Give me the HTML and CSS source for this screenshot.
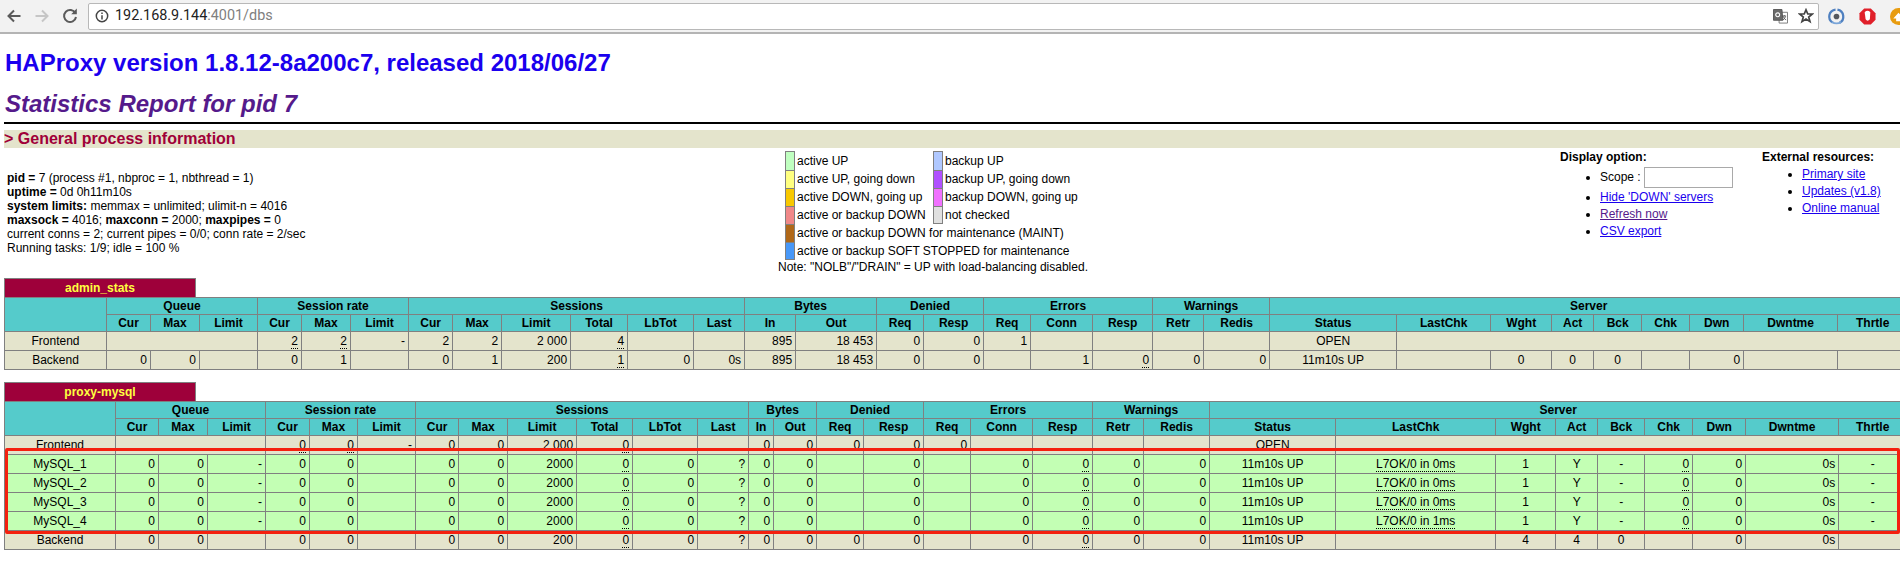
FILE: index.html
```html
<!DOCTYPE html>
<html lang="en">
<head>
<meta charset="utf-8">
<title>Statistics Report for HAProxy</title>
<link rel="stylesheet" href="styles.css">
</head>
<body>
<header class="toolbar">
  <svg class="nav" viewBox="0 0 16 16"><path class="ic" d="M14.5 8H3M8 2.5 2.5 8 8 13.5"/></svg>
  <svg class="nav" viewBox="0 0 16 16"><path class="ic off" d="M1.5 8H13M8 2.5 13.5 8 8 13.5"/></svg>
  <svg class="nav" viewBox="0 0 16 16"><path class="ic" d="M13.4 5.2A6 6 0 1 0 14 9"/><path class="fill" d="M9.2 6.2h5.6V.6z"/></svg>
  <div class="omnibox">
    <svg class="info" viewBox="0 0 16 16"><circle cx="8" cy="8" r="6.5"/><path d="M8 7v5M8 4v1.8"/></svg>
    <span class="url">192.168.9.144<span class="url-rest">:4001/dbs</span></span>
    <svg class="translate" viewBox="0 0 16 16"><path class="tr-back" d="M6.5 3.5H15.5V15H6.5z"/><path class="tr-front" d="M.5.5H9.5L10.5 12H.5z"/><circle class="tr-g" cx="5" cy="6.2" r="2.1"/><path class="tr-x" d="M10 7.5h4M12 6.5v1M11 8c.4 1.5 1.5 3 3 3.6M13.3 8c-.4 1.6-1.3 2.8-2.6 3.6"/></svg>
    <svg class="star" viewBox="0 0 16 16"><path d="M8 1.8 9.8 6h4.6l-3.7 3 1.3 4.6L8 11l-4 2.6L5.3 9 1.6 6h4.6z"/></svg>
  </div>
  <div class="ext-icons">
    <svg class="ext" viewBox="0 0 18 18"><path class="ring-b" d="M5 15.5A7.5 7.5 0 0 1 8 1.6"/><path class="ring-b" d="M10 1.7A7.5 7.5 0 0 1 12 15.8"/><path class="ring-c" d="M4 14.5A8 8 0 0 0 14 14.5"/><circle class="dot" cx="9" cy="9" r="3"/></svg>
    <svg class="ext" viewBox="0 0 18 18"><path class="stop" d="M5.5 0.5H12.5L17.5 5.5V12.5L12.5 17.5H5.5L.5 12.5V5.5z"/><path class="hand" d="M6 4.5Q9 1.5 12 4.5L11.5 12Q9 15 7 12z"/></svg>
    <svg class="ext" viewBox="0 0 18 18"><circle class="orange" cx="9" cy="9" r="9"/><path class="cloud" d="M3.5 11 9 5l5.5 6h-3v3h-5v-3z"/></svg>
  </div>
</header>

<main class="page">
  <h1 class="heading-main"><a href="#" class="link-plain">HAProxy version 1.8.12-8a200c7, released 2018/06/27</a></h1>
  <h2 class="heading-sub">Statistics Report for pid 7</h2>
  <hr class="rule">
  <h3 class="section">&gt; General process information</h3>

  <section class="info-row">
    <p class="process">
      <b>pid = </b>7 (process #1, nbproc = 1, nbthread = 1)<br>
      <b>uptime = </b>0d 0h11m10s<br>
      <b>system limits:</b> memmax = unlimited; ulimit-n = 4016<br>
      <b>maxsock = </b>4016; <b>maxconn = </b>2000; <b>maxpipes = </b>0<br>
      current conns = 2; current pipes = 0/0; conn rate = 2/sec<br>
      Running tasks: 1/9; idle = 100 %
    </p>

    <div class="legend-box">
      <table class="legend">
        <tr><td><i class="sw s-up"></i></td><td class="l1">active UP</td><td><i class="sw s-bup"></i></td><td>backup UP</td></tr>
        <tr><td><i class="sw s-upd"></i></td><td>active UP, going down</td><td><i class="sw s-bupd"></i></td><td>backup UP, going down</td></tr>
        <tr><td><i class="sw s-dnu"></i></td><td>active DOWN, going up</td><td><i class="sw s-bdnu"></i></td><td>backup DOWN, going up</td></tr>
        <tr><td><i class="sw s-dn"></i></td><td>active or backup DOWN</td><td><i class="sw s-nc"></i></td><td>not checked</td></tr>
        <tr><td><i class="sw s-mt"></i></td><td colspan="3">active or backup DOWN for maintenance (MAINT)</td></tr>
        <tr><td><i class="sw s-st"></i></td><td colspan="3">active or backup SOFT STOPPED for maintenance</td></tr>
      </table>
      <div class="legend-note">Note: "NOLB"/"DRAIN" = UP with load-balancing disabled.</div>
    </div>

    <div class="options">
      <b class="opt-title">Display option:</b>
      <ul class="opt-list">
        <li class="scope">Scope : <input class="scope-input" type="text"></li>
        <li><a href="#" class="lnk">Hide 'DOWN' servers</a></li>
        <li><a href="#" class="lnk visited">Refresh now</a></li>
        <li><a href="#" class="lnk">CSV export</a></li>
      </ul>
    </div>

    <div class="external">
      <b class="opt-title">External resources:</b>
      <ul class="opt-list">
        <li><a href="#" class="lnk">Primary site</a></li>
        <li><a href="#" class="lnk">Updates (v1.8)</a></li>
        <li><a href="#" class="lnk">Online manual</a></li>
      </ul>
    </div>
  </section>

  <section class="proxy">
    <div class="pxname">admin_stats</div>
    <table class="tbl tbl-a">
      <colgroup><col><col><col><col><col><col><col><col><col><col><col><col><col><col><col><col><col><col><col><col><col><col><col><col><col><col><col><col><col><col><col></colgroup>
      <tr class="titre"><th rowspan="2"></th><th colspan="3">Queue</th><th colspan="3">Session rate</th><th colspan="6">Sessions</th><th colspan="2">Bytes</th><th colspan="2">Denied</th><th colspan="3">Errors</th><th colspan="2">Warnings</th><th colspan="9">Server</th></tr>
      <tr class="titre"><th>Cur</th><th>Max</th><th>Limit</th><th>Cur</th><th>Max</th><th>Limit</th><th>Cur</th><th>Max</th><th>Limit</th><th>Total</th><th>LbTot</th><th>Last</th><th>In</th><th>Out</th><th>Req</th><th>Resp</th><th>Req</th><th>Conn</th><th>Resp</th><th>Retr</th><th>Redis</th><th>Status</th><th>LastChk</th><th>Wght</th><th>Act</th><th>Bck</th><th>Chk</th><th>Dwn</th><th>Dwntme</th><th>Thrtle</th></tr>
      <tr class="plain"><td class="ac">Frontend</td><td colspan="3"></td><td><u>2</u></td><td><u>2</u></td><td>-</td><td>2</td><td>2</td><td>2 000</td><td><u>4</u></td><td></td><td></td><td>895</td><td>18 453</td><td>0</td><td>0</td><td>1</td><td></td><td></td><td></td><td></td><td class="ac">OPEN</td><td colspan="8"></td></tr>
      <tr class="plain"><td class="ac">Backend</td><td>0</td><td>0</td><td></td><td>0</td><td>1</td><td></td><td>0</td><td>1</td><td>200</td><td><u>1</u></td><td>0</td><td>0s</td><td>895</td><td>18 453</td><td>0</td><td>0</td><td></td><td>1</td><td><u>0</u></td><td>0</td><td>0</td><td class="ac">11m10s UP</td><td></td><td class="ac">0</td><td class="ac">0</td><td class="ac">0</td><td></td><td>0</td><td></td><td></td></tr>
    </table>
  </section>

  <section class="proxy proxy-second">
    <div class="pxname">proxy-mysql</div>
    <table class="tbl tbl-b">
      <colgroup><col><col><col><col><col><col><col><col><col><col><col><col><col><col><col><col><col><col><col><col><col><col><col><col><col><col><col><col><col><col><col></colgroup>
      <tr class="titre"><th rowspan="2"></th><th colspan="3">Queue</th><th colspan="3">Session rate</th><th colspan="6">Sessions</th><th colspan="2">Bytes</th><th colspan="2">Denied</th><th colspan="3">Errors</th><th colspan="2">Warnings</th><th colspan="9">Server</th></tr>
      <tr class="titre"><th>Cur</th><th>Max</th><th>Limit</th><th>Cur</th><th>Max</th><th>Limit</th><th>Cur</th><th>Max</th><th>Limit</th><th>Total</th><th>LbTot</th><th>Last</th><th>In</th><th>Out</th><th>Req</th><th>Resp</th><th>Req</th><th>Conn</th><th>Resp</th><th>Retr</th><th>Redis</th><th>Status</th><th>LastChk</th><th>Wght</th><th>Act</th><th>Bck</th><th>Chk</th><th>Dwn</th><th>Dwntme</th><th>Thrtle</th></tr>
      <tr class="plain"><td class="ac">Frontend</td><td colspan="3"></td><td><u>0</u></td><td><u>0</u></td><td>-</td><td>0</td><td>0</td><td>2 000</td><td><u>0</u></td><td></td><td></td><td>0</td><td>0</td><td>0</td><td>0</td><td>0</td><td></td><td></td><td></td><td></td><td class="ac">OPEN</td><td colspan="8"></td></tr>
      <tr class="active"><td class="ac">MySQL_1</td><td>0</td><td>0</td><td>-</td><td>0</td><td>0</td><td></td><td>0</td><td>0</td><td>2000</td><td><u>0</u></td><td>0</td><td>?</td><td>0</td><td>0</td><td></td><td>0</td><td></td><td>0</td><td><u>0</u></td><td>0</td><td>0</td><td class="ac">11m10s UP</td><td class="ac"><u>L7OK/0 in 0ms</u></td><td class="ac">1</td><td class="ac">Y</td><td class="ac">-</td><td><u>0</u></td><td>0</td><td>0s</td><td class="ac">-</td></tr>
      <tr class="active"><td class="ac">MySQL_2</td><td>0</td><td>0</td><td>-</td><td>0</td><td>0</td><td></td><td>0</td><td>0</td><td>2000</td><td><u>0</u></td><td>0</td><td>?</td><td>0</td><td>0</td><td></td><td>0</td><td></td><td>0</td><td><u>0</u></td><td>0</td><td>0</td><td class="ac">11m10s UP</td><td class="ac"><u>L7OK/0 in 0ms</u></td><td class="ac">1</td><td class="ac">Y</td><td class="ac">-</td><td><u>0</u></td><td>0</td><td>0s</td><td class="ac">-</td></tr>
      <tr class="active"><td class="ac">MySQL_3</td><td>0</td><td>0</td><td>-</td><td>0</td><td>0</td><td></td><td>0</td><td>0</td><td>2000</td><td><u>0</u></td><td>0</td><td>?</td><td>0</td><td>0</td><td></td><td>0</td><td></td><td>0</td><td><u>0</u></td><td>0</td><td>0</td><td class="ac">11m10s UP</td><td class="ac"><u>L7OK/0 in 0ms</u></td><td class="ac">1</td><td class="ac">Y</td><td class="ac">-</td><td><u>0</u></td><td>0</td><td>0s</td><td class="ac">-</td></tr>
      <tr class="active"><td class="ac">MySQL_4</td><td>0</td><td>0</td><td>-</td><td>0</td><td>0</td><td></td><td>0</td><td>0</td><td>2000</td><td><u>0</u></td><td>0</td><td>?</td><td>0</td><td>0</td><td></td><td>0</td><td></td><td>0</td><td><u>0</u></td><td>0</td><td>0</td><td class="ac">11m10s UP</td><td class="ac"><u>L7OK/0 in 1ms</u></td><td class="ac">1</td><td class="ac">Y</td><td class="ac">-</td><td><u>0</u></td><td>0</td><td>0s</td><td class="ac">-</td></tr>
      <tr class="plain"><td class="ac">Backend</td><td>0</td><td>0</td><td></td><td>0</td><td>0</td><td></td><td>0</td><td>0</td><td>200</td><td><u>0</u></td><td>0</td><td>?</td><td>0</td><td>0</td><td>0</td><td>0</td><td></td><td>0</td><td><u>0</u></td><td>0</td><td>0</td><td class="ac">11m10s UP</td><td></td><td class="ac">4</td><td class="ac">4</td><td class="ac">0</td><td></td><td>0</td><td>0s</td><td></td></tr>
    </table>
    <div class="highlight"></div>
  </section>
</main>
</body>
</html>
```

FILE: styles.css
```css
html, body {
  margin: 0;
  padding: 0;
  background: #fff;
  overflow: hidden;
  height: 565px;
  width: 1900px;
}
body {
  font-family: "Liberation Sans", Arial, sans-serif;
  font-size: 12px;
  line-height: 14px;
  color: #000;
}

/* Browser toolbar */
.toolbar {
  display: flex;
  align-items: center;
  box-sizing: border-box;
  height: 34px;
  padding: 1px 0;
  background: #f2f2f2;
  border-bottom: 2px solid #b4b4b4;
}
.nav {
  width: 16px;
  height: 16px;
  margin: 0 6px;
  flex: none;
}
.ic { fill: none; stroke: #5a5a5a; stroke-width: 2; }
.ic.off { stroke: #c6c6c6; }
.fill { fill: #5a5a5a; }
.omnibox {
  display: flex;
  align-items: center;
  box-sizing: border-box;
  width: 1731px;
  height: 27px;
  margin-left: 4px;
  padding: 0 4px 0 6px;
  background: #fff;
  border: 1px solid #b8b8b8;
  border-radius: 2px;
  flex: none;
}
.info { width: 14px; height: 14px; fill: none; stroke: #444; stroke-width: 1.7; flex: none; }
.url {
  margin-left: 6px;
  font-family: Roboto, sans-serif;
  font-size: 14.4px;
  color: #222;
  white-space: nowrap;
  flex: 1;
}
.url-rest { color: #808080; }
.translate { width: 15px; height: 15px; flex: none; margin-right: 10px; }
.tr-back { fill: #fff; stroke: #777; }
.tr-front { fill: #6a6a6a; stroke: #555; }
.tr-g { fill: none; stroke: #fff; stroke-width: 1.2; }
.tr-x { fill: none; stroke: #555; }
.star { width: 16px; height: 16px; fill: none; stroke: #444; stroke-width: 1.7; flex: none; }
.ext-icons {
  display: flex;
  align-items: center;
  gap: 14px;
  margin-left: 9px;
  flex: none;
}
.ext { width: 17px; height: 17px; flex: none; overflow: visible; }
.ring-b { fill: none; stroke: #4f80c0; stroke-width: 2.4; }
.ring-c { fill: none; stroke: #7aa5d8; stroke-width: 2; }
.dot { fill: #55585e; }
.stop { fill: #e0202a; }
.hand { fill: #fff; }
.orange { fill: #e89c10; }
.cloud { fill: #fff; }

/* Page */
.page { padding-left: 4px; }
.heading-main {
  margin: 0;
  padding: 15px 0 0 1px;
  font-size: 24px;
  line-height: 28px;
  font-weight: bold;
}
.link-plain { color: #1a00ee; text-decoration: none; }
.heading-sub {
  margin: 0;
  padding: 13px 0 0 1px;
  font-size: 24px;
  line-height: 28px;
  font-weight: bold;
  font-style: italic;
  color: #551a8b;
}
.rule {
  margin: 4px 0 0 0;
  height: 2px;
  border: 0;
  background: #000;
}
.section {
  margin: 6px 0 0 0;
  height: 18px;
  font-size: 16px;
  line-height: 18px;
  font-weight: bold;
  color: #a00038;
  background: #e4e4cc;
}

.info-row {
  display: flex;
  align-items: flex-start;
  height: 130px;
}
.process {
  margin: 23px 0 0 3px;
  width: 771px;
  flex: none;
}
.legend-box {
  width: 782px;
  flex: none;
  padding-top: 3px;
}
.legend {
  border-collapse: collapse;
  margin-left: 7px;
}
.legend td { padding: 0; height: 18px; vertical-align: middle; }
.legend tr:first-child td { height: 19px; }
.legend td:nth-child(2) { padding-left: 2px; min-width: 136px; }
.legend td:nth-child(4) { padding-left: 2px; }
.sw {
  display: block;
  box-sizing: border-box;
  width: 10px;
  height: 18px;
  border-left: 1px solid #808080;
  border-right: 1px solid #808080;
  border-top: 1px solid #808080;
}
.legend tr:first-child .sw { height: 19px; }
.legend tr:nth-child(4) td:nth-child(3) .sw { border-bottom: 1px solid #808080; }
.legend tr:last-child .sw { border-bottom: 1px solid #808080; }
.s-up { background: #c0ffc0; }
.s-upd { background: #ffff80; }
.s-dnu { background: #f8c800; }
.s-dn { background: #f08888; }
.s-mt { background: #b06818; }
.s-st { background: #4898f8; }
.s-bup { background: #b0c8ff; }
.s-bupd { background: #b050ff; }
.s-bdnu { background: #f070ff; }
.s-nc { background: #e0e0e0; }
.legend-note { white-space: nowrap; }

.options { width: 202px; flex: none; padding-top: 2px; }
.external { width: 137px; flex: none; padding-top: 2px; }
.opt-title { display: block; }
.opt-list { margin: 3px 0 0 0; padding: 0 0 0 40px; }
.external .opt-list { margin-top: 2px; }
.opt-list li { height: 17px; line-height: 17px; }
.options .opt-list li.scope { height: 22px; line-height: 21px; margin-top: 1px; }
.scope-input {
  box-sizing: border-box;
  width: 89px;
  height: 21px;
  padding: 0;
  margin: 0;
  border: 1px solid #a9a9a9;
  vertical-align: top;
}
.lnk { color: #1a00ee; text-decoration: underline; }
.lnk.visited { color: #551a8b; }

/* Proxy tables */
.proxy { position: relative; }
.proxy-second { margin-top: 12px; }
.pxname {
  box-sizing: border-box;
  width: 192px;
  height: 20px;
  line-height: 18px;
  border: 1px solid #808080;
  background: #9e003a;
  color: #ffff40;
  font-weight: bold;
  text-align: center;
}
.tbl {
  border-collapse: collapse;
  table-layout: fixed;
  margin-top: -1px;
  width: 1903px;
}
.tbl th, .tbl td {
  border: 1px solid #808080;
  overflow: hidden;
  white-space: nowrap;
  box-sizing: border-box;
}
.tbl th {
  height: 17px;
  padding: 0 1px;
  font-weight: bold;
  text-align: center;
  background: #55cbcb;
}
.tbl td {
  height: 19px;
  padding: 1px 3px;
  text-align: right;
  vertical-align: middle;
}
.tbl td.ac { text-align: center; }
.plain td { background: #e4e4cc; }
.active td { background: #c3ffb4; }
.tbl u { text-decoration: none; border-bottom: 1px dotted #000; }

.tbl-a col:nth-child(1) { width: 102px; }
.tbl-a col:nth-child(2) { width: 44px; }
.tbl-a col:nth-child(3) { width: 49px; }
.tbl-a col:nth-child(4) { width: 58px; }
.tbl-a col:nth-child(5) { width: 44px; }
.tbl-a col:nth-child(6) { width: 49px; }
.tbl-a col:nth-child(7) { width: 58px; }
.tbl-a col:nth-child(8) { width: 44px; }
.tbl-a col:nth-child(9) { width: 49px; }
.tbl-a col:nth-child(10) { width: 69px; }
.tbl-a col:nth-child(11) { width: 57px; }
.tbl-a col:nth-child(12) { width: 66px; }
.tbl-a col:nth-child(13) { width: 51px; }
.tbl-a col:nth-child(14) { width: 51px; }
.tbl-a col:nth-child(15) { width: 81px; }
.tbl-a col:nth-child(16) { width: 47px; }
.tbl-a col:nth-child(17) { width: 60px; }
.tbl-a col:nth-child(18) { width: 47px; }
.tbl-a col:nth-child(19) { width: 62px; }
.tbl-a col:nth-child(20) { width: 60px; }
.tbl-a col:nth-child(21) { width: 51px; }
.tbl-a col:nth-child(22) { width: 66px; }
.tbl-a col:nth-child(23) { width: 127px; }
.tbl-a col:nth-child(24) { width: 94px; }
.tbl-a col:nth-child(25) { width: 61px; }
.tbl-a col:nth-child(26) { width: 42px; }
.tbl-a col:nth-child(27) { width: 48px; }
.tbl-a col:nth-child(28) { width: 48px; }
.tbl-a col:nth-child(29) { width: 54px; }
.tbl-a col:nth-child(30) { width: 94px; }
.tbl-a col:nth-child(31) { width: 70px; }

.tbl-b { width: 1902px; }
.tbl-b col:nth-child(1) { width: 111px; }
.tbl-b col:nth-child(2) { width: 43px; }
.tbl-b col:nth-child(3) { width: 49px; }
.tbl-b col:nth-child(4) { width: 58px; }
.tbl-b col:nth-child(5) { width: 44px; }
.tbl-b col:nth-child(6) { width: 48px; }
.tbl-b col:nth-child(7) { width: 58px; }
.tbl-b col:nth-child(8) { width: 43px; }
.tbl-b col:nth-child(9) { width: 49px; }
.tbl-b col:nth-child(10) { width: 69px; }
.tbl-b col:nth-child(11) { width: 56px; }
.tbl-b col:nth-child(12) { width: 65px; }
.tbl-b col:nth-child(13) { width: 51px; }
.tbl-b col:nth-child(14) { width: 25px; }
.tbl-b col:nth-child(15) { width: 43px; }
.tbl-b col:nth-child(16) { width: 47px; }
.tbl-b col:nth-child(17) { width: 60px; }
.tbl-b col:nth-child(18) { width: 47px; }
.tbl-b col:nth-child(19) { width: 62px; }
.tbl-b col:nth-child(20) { width: 60px; }
.tbl-b col:nth-child(21) { width: 51px; }
.tbl-b col:nth-child(22) { width: 66px; }
.tbl-b col:nth-child(23) { width: 126px; }
.tbl-b col:nth-child(24) { width: 160px; }
.tbl-b col:nth-child(25) { width: 60px; }
.tbl-b col:nth-child(26) { width: 42px; }
.tbl-b col:nth-child(27) { width: 47px; }
.tbl-b col:nth-child(28) { width: 48px; }
.tbl-b col:nth-child(29) { width: 53px; }
.tbl-b col:nth-child(30) { width: 93px; }
.tbl-b col:nth-child(31) { width: 68px; }

.highlight {
  position: absolute;
  left: 1px;
  top: 66px;
  box-sizing: border-box;
  width: 1895px;
  height: 86px;
  border: 3px solid #f4200f;
  border-radius: 2px;
  pointer-events: none;
}
```
